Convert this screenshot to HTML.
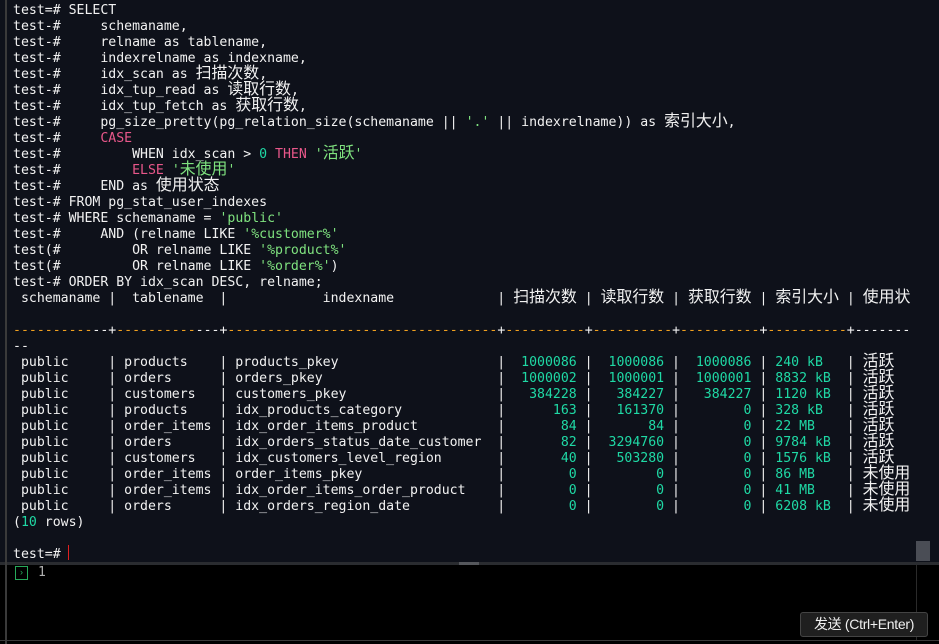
<!DOCTYPE html>
<html><head><meta charset="utf-8"><style>
html,body{margin:0;padding:0;width:939px;height:644px;overflow:hidden;background:#000;}
#term{position:absolute;left:0;top:0;width:939px;height:563px;background:#0e111a;}
#lb{position:absolute;left:5px;top:0;width:2px;height:644px;background:#3a3a3a;}
#t{position:absolute;left:13px;top:3px;margin:0;width:899px;height:559px;overflow:hidden;font-family:"DejaVu Sans Mono",monospace;font-size:13.2px;color:#f2f2f2;}
#t div{height:16px;line-height:16px;overflow:visible;white-space:pre;}
.c{font-family:"Noto Sans CJK SC",sans-serif;font-size:15.9px;line-height:10px;}
.k{color:#e8578a}.s{color:#7fe27f}.n{color:#1fd9a5}.o{color:#f0a020}
#sb{position:absolute;left:916px;top:541px;width:14px;height:20px;background:#4a4d55;}
#div{position:absolute;left:0;top:562px;width:939px;height:3px;background:#2a2c30;}
#hd{position:absolute;left:459px;top:562px;width:20px;height:3px;background:#55575c;}
#rb{position:absolute;left:916px;top:565px;width:1px;height:75px;background:#2a2a2a;}
#bb{position:absolute;left:0;top:640px;width:939px;height:1px;background:#3a3a3a;}
#ic{position:absolute;left:15px;top:566px;width:11px;height:12px;border:1px solid #27a85a;color:#27a85a;font:9px "Liberation Mono",monospace;line-height:12px;text-align:center;}
#one{position:absolute;left:38px;top:565px;color:#b0b0b0;font:13px "DejaVu Sans Mono",monospace;}
#btn{position:absolute;left:800px;top:612px;width:126px;height:23px;background:#1f1f1f;border:1px solid #444;border-radius:3px;color:#f0f0f0;font:14px "Liberation Sans","Noto Sans CJK SC",sans-serif;line-height:23px;text-align:center;letter-spacing:-0.3px;}
#cur{position:absolute;left:68px;top:545px;width:1px;height:15px;background:#e02020;}
</style></head><body>
<div id="term"></div>
<div id="t"><div>test=# SELECT</div><div>test-#     schemaname,</div><div>test-#     relname as tablename,</div><div>test-#     indexrelname as indexname,</div><div>test-#     idx_scan as <span class="c">扫描次数</span>,</div><div>test-#     idx_tup_read as <span class="c">读取行数</span>,</div><div>test-#     idx_tup_fetch as <span class="c">获取行数</span>,</div><div>test-#     pg_size_pretty(pg_relation_size(schemaname || <span class="s">'.'</span> || indexrelname)) as <span class="c">索引大小</span>,</div><div>test-#     <span class="k">CASE</span></div><div>test-#         WHEN idx_scan &gt; <span class="n">0</span> <span class="k">THEN</span> <span class="s">'<span class="c">活跃</span>'</span></div><div>test-#         <span class="k">ELSE</span> <span class="s">'<span class="c">未使用</span>'</span></div><div>test-#     END as <span class="c">使用状态</span></div><div>test-# FROM pg_stat_user_indexes</div><div>test-# WHERE schemaname = <span class="s">'public'</span></div><div>test-#     AND (relname LIKE <span class="s">'%customer%'</span></div><div>test(#         OR relname LIKE <span class="s">'%product%'</span></div><div>test(#         OR relname LIKE <span class="s">'%order%'</span>)</div><div>test-# ORDER BY idx_scan DESC, relname;</div><div> schemaname |  tablename  |            indexname             | <span class="c">扫描次数</span> | <span class="c">读取行数</span> | <span class="c">获取行数</span> | <span class="c">索引大小</span> | <span class="c">使用状</span></div><div> </div><div><span class="o">----------</span>--+<span class="o">----------</span>---+<span class="o">----------------------------------</span>+<span class="o">----------</span>+<span class="o">----------</span>+<span class="o">----------</span>+<span class="o">----------</span>+--------</div><div>--</div><div> public     | products    | products_pkey                    | <span class="n"> 1000086</span> | <span class="n"> 1000086</span> | <span class="n"> 1000086</span> | <span class="n">240 kB  </span> | <span class="c">活跃</span></div><div> public     | orders      | orders_pkey                      | <span class="n"> 1000002</span> | <span class="n"> 1000001</span> | <span class="n"> 1000001</span> | <span class="n">8832 kB </span> | <span class="c">活跃</span></div><div> public     | customers   | customers_pkey                   | <span class="n">  384228</span> | <span class="n">  384227</span> | <span class="n">  384227</span> | <span class="n">1120 kB </span> | <span class="c">活跃</span></div><div> public     | products    | idx_products_category            | <span class="n">     163</span> | <span class="n">  161370</span> | <span class="n">       0</span> | <span class="n">328 kB  </span> | <span class="c">活跃</span></div><div> public     | order_items | idx_order_items_product          | <span class="n">      84</span> | <span class="n">      84</span> | <span class="n">       0</span> | <span class="n">22 MB   </span> | <span class="c">活跃</span></div><div> public     | orders      | idx_orders_status_date_customer  | <span class="n">      82</span> | <span class="n"> 3294760</span> | <span class="n">       0</span> | <span class="n">9784 kB </span> | <span class="c">活跃</span></div><div> public     | customers   | idx_customers_level_region       | <span class="n">      40</span> | <span class="n">  503280</span> | <span class="n">       0</span> | <span class="n">1576 kB </span> | <span class="c">活跃</span></div><div> public     | order_items | order_items_pkey                 | <span class="n">       0</span> | <span class="n">       0</span> | <span class="n">       0</span> | <span class="n">86 MB   </span> | <span class="c">未使用</span></div><div> public     | order_items | idx_order_items_order_product    | <span class="n">       0</span> | <span class="n">       0</span> | <span class="n">       0</span> | <span class="n">41 MB   </span> | <span class="c">未使用</span></div><div> public     | orders      | idx_orders_region_date           | <span class="n">       0</span> | <span class="n">       0</span> | <span class="n">       0</span> | <span class="n">6208 kB </span> | <span class="c">未使用</span></div><div>(<span class="n">10</span> rows)</div><div> </div><div>test=# </div></div>
<div id="cur"></div>
<div id="sb"></div>
<div id="div"></div><div id="hd"></div>
<div id="rb"></div><div id="bb"></div><div id="lb"></div>
<div id="ic">›</div>
<div id="one">1</div>
<div id="btn">发送 (Ctrl+Enter)</div>
</body></html>
